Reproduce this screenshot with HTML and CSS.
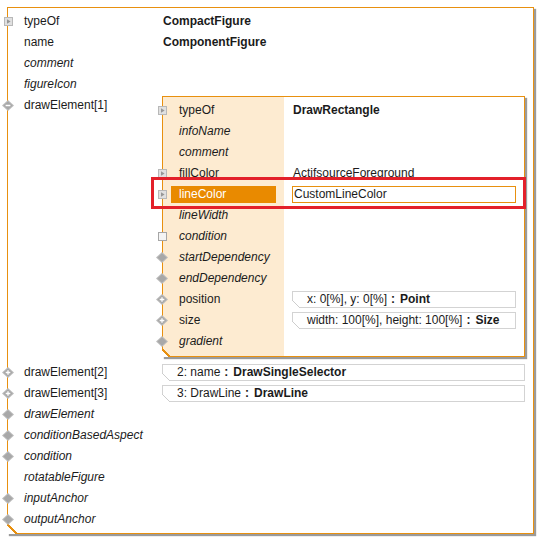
FILE: index.html
```html
<!DOCTYPE html>
<html>
<head>
<meta charset="utf-8">
<link rel="stylesheet" href="styles.css">
</head>
<body>
<div class="figure">
  <div class="row"><span class="slot"><svg class="ic9" width="9" height="9" viewBox="0 0 9 9"><rect x="0.5" y="0.5" width="8" height="8" fill="#e0e0e0" stroke="#b8b8b8"/><path d="M3 2.2 L6.6 4.5 L3 6.8Z" fill="#969696"/></svg></span><span class="lbl">typeOf</span><span class="val b">CompactFigure</span></div>
  <div class="row"><span class="slot"></span><span class="lbl">name</span><span class="val b">ComponentFigure</span></div>
  <div class="row"><span class="slot"></span><span class="lbl i">comment</span></div>
  <div class="row"><span class="slot"></span><span class="lbl i">figureIcon</span></div>
  <div class="row tall"><span class="slot"><svg class="ic11" width="12" height="11" viewBox="0 0 12 11"><path d="M6 0 L12 5.5 L6 11 L0 5.5Z" fill="#bdbdbd"/><path d="M6 1.3 L10.6 5.5 L6 9.7 L1.4 5.5Z" fill="#a8a8a8"/><path d="M3.6 5.5h4.8" stroke="#ffffff" stroke-width="1.5"/></svg></span><span class="lbl">drawElement[1]</span>
    <div class="panel">
      <div class="prow"><span class="pslot"><svg class="ic9" width="9" height="9" viewBox="0 0 9 9"><rect x="0.5" y="0.5" width="8" height="8" fill="#e0e0e0" stroke="#b8b8b8"/><path d="M3 2.2 L6.6 4.5 L3 6.8Z" fill="#969696"/></svg></span><span class="plbl">typeOf</span><span class="pval b">DrawRectangle</span></div>
      <div class="prow"><span class="pslot"></span><span class="plbl i">infoName</span><span class="pval"></span></div>
      <div class="prow"><span class="pslot"></span><span class="plbl i">comment</span><span class="pval"></span></div>
      <div class="prow"><span class="pslot"><svg class="ic9" width="9" height="9" viewBox="0 0 9 9"><rect x="0.5" y="0.5" width="8" height="8" fill="#e0e0e0" stroke="#b8b8b8"/><path d="M3 2.2 L6.6 4.5 L3 6.8Z" fill="#969696"/></svg></span><span class="plbl">fillColor</span><span class="pval">ActifsourceForeground</span></div>
      <div class="prow"><span class="pslot"><svg class="ic9" width="9" height="9" viewBox="0 0 9 9"><rect x="0.5" y="0.5" width="8" height="8" fill="#e0e0e0" stroke="#b8b8b8"/><path d="M3 2.2 L6.6 4.5 L3 6.8Z" fill="#969696"/></svg></span><span class="plbl sel">lineColor</span><span class="pval"><span class="input">CustomLineColor</span></span></div>
      <div class="prow"><span class="pslot"></span><span class="plbl i">lineWidth</span><span class="pval"></span></div>
      <div class="prow"><span class="pslot"><svg class="ic9" width="9" height="9" viewBox="0 0 9 9"><rect x="0.5" y="0.5" width="8" height="8" fill="#f4f4f4" stroke="#a6a6a6"/></svg></span><span class="plbl i">condition</span><span class="pval"></span></div>
      <div class="prow"><span class="pslot"><svg class="ic11" width="12" height="11" viewBox="0 0 12 11"><path d="M6 0 L12 5.5 L6 11 L0 5.5Z" fill="#bdbdbd"/><path d="M6 1.3 L10.6 5.5 L6 9.7 L1.4 5.5Z" fill="#a8a8a8"/></svg></span><span class="plbl i">startDependency</span><span class="pval"></span></div>
      <div class="prow"><span class="pslot"><svg class="ic11" width="12" height="11" viewBox="0 0 12 11"><path d="M6 0 L12 5.5 L6 11 L0 5.5Z" fill="#bdbdbd"/><path d="M6 1.3 L10.6 5.5 L6 9.7 L1.4 5.5Z" fill="#a8a8a8"/></svg></span><span class="plbl i">endDependency</span><span class="pval"></span></div>
      <div class="prow"><span class="pslot"><svg class="ic11" width="12" height="11" viewBox="0 0 12 11"><path d="M6 0 L12 5.5 L6 11 L0 5.5Z" fill="#bdbdbd"/><path d="M6 1.3 L10.6 5.5 L6 9.7 L1.4 5.5Z" fill="#a8a8a8"/><path d="M3.7 5.5h4.6M6 3.2v4.6" stroke="#ffffff" stroke-width="1.3"/></svg></span><span class="plbl">position</span><span class="pval"><span class="ref">x: 0[%], y: 0[%]<span class="sep">:</span><b>Point</b></span></span></div>
      <div class="prow"><span class="pslot"><svg class="ic11" width="12" height="11" viewBox="0 0 12 11"><path d="M6 0 L12 5.5 L6 11 L0 5.5Z" fill="#bdbdbd"/><path d="M6 1.3 L10.6 5.5 L6 9.7 L1.4 5.5Z" fill="#a8a8a8"/><path d="M3.7 5.5h4.6M6 3.2v4.6" stroke="#ffffff" stroke-width="1.3"/></svg></span><span class="plbl">size</span><span class="pval"><span class="ref">width: 100[%], height: 100[%]<span class="sep">:</span><b>Size</b></span></span></div>
      <div class="prow"><span class="pslot"><svg class="ic11" width="12" height="11" viewBox="0 0 12 11"><path d="M6 0 L12 5.5 L6 11 L0 5.5Z" fill="#bdbdbd"/><path d="M6 1.3 L10.6 5.5 L6 9.7 L1.4 5.5Z" fill="#a8a8a8"/></svg></span><span class="plbl i">gradient</span><span class="pval"></span></div>
    </div>
  </div>
  <div class="row"><span class="slot"><svg class="ic11" width="12" height="11" viewBox="0 0 12 11"><path d="M6 0 L12 5.5 L6 11 L0 5.5Z" fill="#bdbdbd"/><path d="M6 1.3 L10.6 5.5 L6 9.7 L1.4 5.5Z" fill="#a8a8a8"/><path d="M3.7 5.5h4.6M6 3.2v4.6" stroke="#ffffff" stroke-width="1.3"/></svg></span><span class="lbl">drawElement[2]</span><span class="ref wide">2: name<span class="sep">:</span><b>DrawSingleSelector</b></span></div>
  <div class="row"><span class="slot"><svg class="ic11" width="12" height="11" viewBox="0 0 12 11"><path d="M6 0 L12 5.5 L6 11 L0 5.5Z" fill="#bdbdbd"/><path d="M6 1.3 L10.6 5.5 L6 9.7 L1.4 5.5Z" fill="#a8a8a8"/><path d="M3.7 5.5h4.6M6 3.2v4.6" stroke="#ffffff" stroke-width="1.3"/></svg></span><span class="lbl">drawElement[3]</span><span class="ref wide">3: DrawLine<span class="sep">:</span><b>DrawLine</b></span></div>
  <div class="row"><span class="slot"><svg class="ic11" width="12" height="11" viewBox="0 0 12 11"><path d="M6 0 L12 5.5 L6 11 L0 5.5Z" fill="#bdbdbd"/><path d="M6 1.3 L10.6 5.5 L6 9.7 L1.4 5.5Z" fill="#a8a8a8"/></svg></span><span class="lbl i">drawElement</span></div>
  <div class="row"><span class="slot"><svg class="ic11" width="12" height="11" viewBox="0 0 12 11"><path d="M6 0 L12 5.5 L6 11 L0 5.5Z" fill="#bdbdbd"/><path d="M6 1.3 L10.6 5.5 L6 9.7 L1.4 5.5Z" fill="#a8a8a8"/></svg></span><span class="lbl i">conditionBasedAspect</span></div>
  <div class="row"><span class="slot"><svg class="ic11" width="12" height="11" viewBox="0 0 12 11"><path d="M6 0 L12 5.5 L6 11 L0 5.5Z" fill="#bdbdbd"/><path d="M6 1.3 L10.6 5.5 L6 9.7 L1.4 5.5Z" fill="#a8a8a8"/></svg></span><span class="lbl i">condition</span></div>
  <div class="row"><span class="slot"></span><span class="lbl i">rotatableFigure</span></div>
  <div class="row"><span class="slot"><svg class="ic11" width="12" height="11" viewBox="0 0 12 11"><path d="M6 0 L12 5.5 L6 11 L0 5.5Z" fill="#bdbdbd"/><path d="M6 1.3 L10.6 5.5 L6 9.7 L1.4 5.5Z" fill="#a8a8a8"/></svg></span><span class="lbl i">inputAnchor</span></div>
  <div class="row"><span class="slot"><svg class="ic11" width="12" height="11" viewBox="0 0 12 11"><path d="M6 0 L12 5.5 L6 11 L0 5.5Z" fill="#bdbdbd"/><path d="M6 1.3 L10.6 5.5 L6 9.7 L1.4 5.5Z" fill="#a8a8a8"/></svg></span><span class="lbl i">outputAnchor</span></div>
</div>

<div class="highlight"></div>
</body>
</html>
```

FILE: styles.css
```css
* { box-sizing: border-box; }

html, body {
  margin: 0;
  padding: 0;
  background: #ffffff;
}

body {
  position: relative;
  width: 539px;
  height: 542px;
  overflow: hidden;
  font-family: "Segoe UI", "Liberation Sans", Arial, sans-serif;
  font-size: 12px;
  color: #1b1b1b;
}

.figure {
  position: relative;
  margin: 7px 0 0 7px;
  width: 527px;
  height: 527px;
  border: 1px solid #e8900f;
  padding: 3px 0 3px 0;
  background: #fff;
  box-shadow: 2px 2px 1px #9b9b9b;
}

.figure::after {
  content: "";
  position: absolute;
  left: -1px;
  bottom: -1px;
  width: 10px;
  height: 10px;
  background: linear-gradient(to top right, #fff calc(50% - 0.8px), #e8900f calc(50% - 0.8px), #e8900f calc(50% + 0.8px), transparent calc(50% + 0.8px));
}

.row {
  display: flex;
  align-items: flex-start;
  height: 21px;
}

.row.tall { height: 267px; }

.slot, .pslot {
  flex: none;
  width: 12px;
  height: 21px;
  display: flex;
  align-items: center;
  justify-content: center;
  position: relative;
  z-index: 2;
}

.slot { margin-left: -6px; }
.pslot { margin-left: -7px; }

.ic9 { width: 9px; height: 9px; display: block; flex: none; }
.ic11 { width: 12px; height: 11px; display: block; flex: none; }

.lbl {
  flex: none;
  width: 148px;
  padding-left: 10px;
  line-height: 21px;
  white-space: nowrap;
}

.val {
  line-height: 21px;
  padding-left: 1px;
  white-space: nowrap;
}

.i { font-style: italic; }
.b { font-weight: bold; }

.panel {
  position: relative;
  flex: none;
  width: 363px;
  margin-top: 1px;
  border: 1px solid #e8900f;
  padding: 3px 0 4px 0;
  background: linear-gradient(to right, #fdebd1 121px, #ffffff 121px);
  box-shadow: 2px 2px 1px #9b9b9b;
}

.panel::after {
  content: "";
  position: absolute;
  left: -1px;
  bottom: -1px;
  width: 8px;
  height: 8px;
  background: linear-gradient(to top right, #fff calc(50% - 0.8px), #e8900f calc(50% - 0.8px), #e8900f calc(50% + 0.8px), transparent calc(50% + 0.8px));
}

.prow {
  display: flex;
  align-items: center;
  height: 21px;
}

.plbl {
  flex: none;
  width: 105px;
  height: 17px;
  margin: 0 8px 0 3px;
  padding-left: 8px;
  line-height: 17px;
  white-space: nowrap;
}

.plbl.sel {
  background: #e98a00;
  color: #ffffff;
}

.pval {
  flex: 1;
  padding: 0 8px 0 9px;
  line-height: 17px;
  white-space: nowrap;
}

.input {
  display: block;
  margin-left: -1px;
  height: 17px;
  border: 1px solid #e8900f;
  padding-left: 1px;
  line-height: 15px;
}

.ref {
  position: relative;
  display: block;
  height: 17px;
  border: 1px solid #d3d3d3;
  padding-left: 14px;
  line-height: 15px;
  white-space: nowrap;
}

.pval .ref { margin-left: -1px; }

.ref.wide {
  flex: none;
  width: 363px;
  margin-top: 2px;
}

.ref::before {
  content: "";
  position: absolute;
  left: -1px;
  bottom: -1px;
  width: 8px;
  height: 8px;
  background: linear-gradient(to top right, #fff calc(50% - 0.7px), #cdcdcd calc(50% - 0.7px), #cdcdcd calc(50% + 0.7px), transparent calc(50% + 0.7px));
}

.sep {
  font-weight: bold;
  margin: 0 5px 0 4px;
}

.highlight {
  position: absolute;
  left: 151px;
  top: 177px;
  width: 375px;
  height: 32px;
  border: 3px solid #e3202a;
  z-index: 5;
}
```
